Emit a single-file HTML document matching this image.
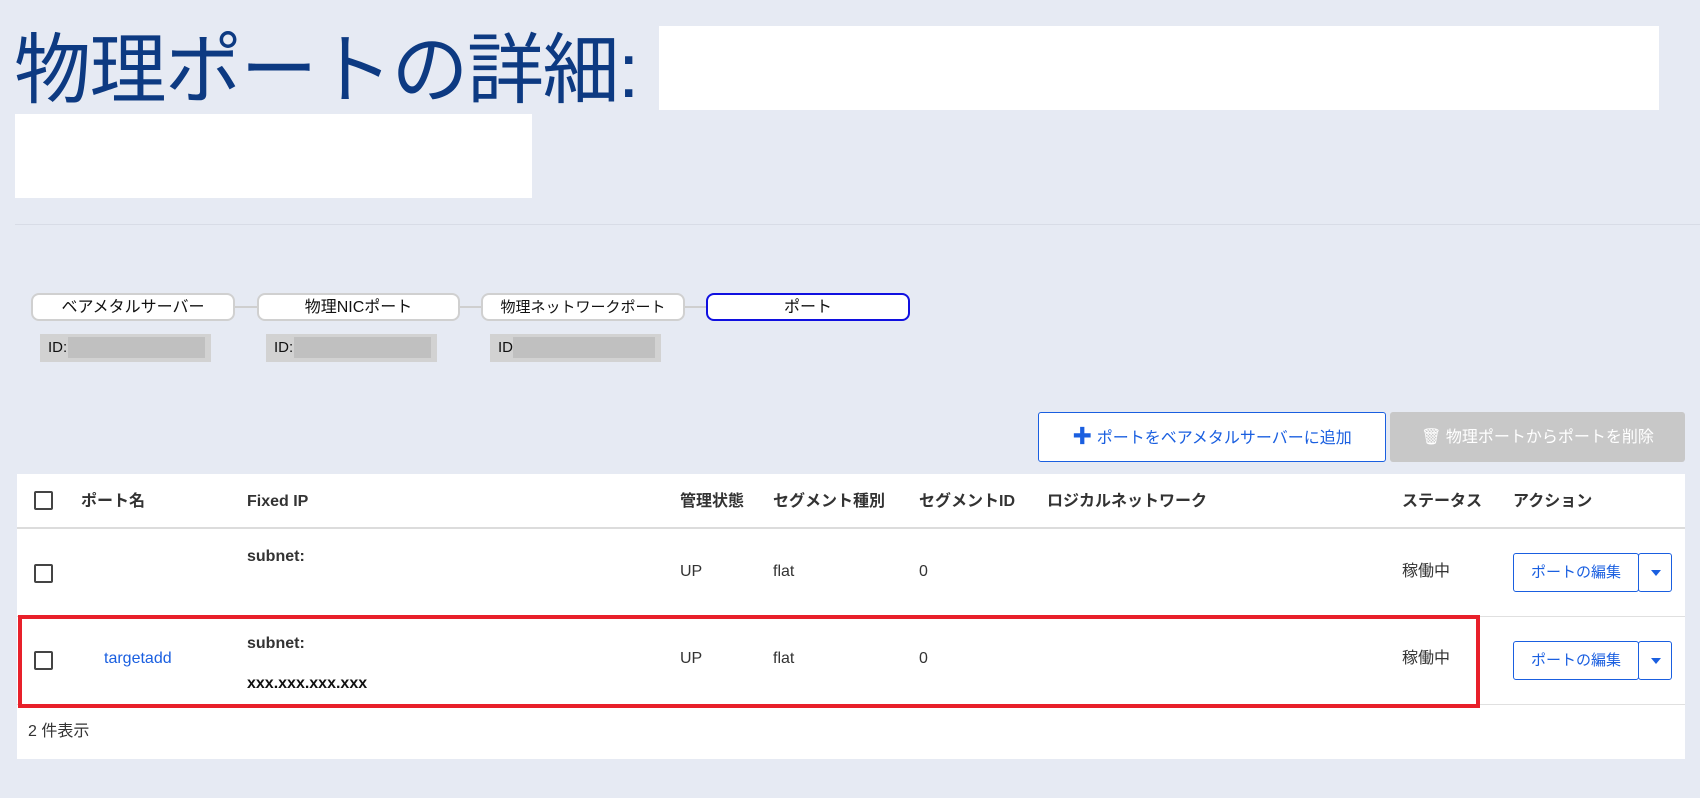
<!DOCTYPE html>
<html><head><meta charset="utf-8"><style>
*{box-sizing:border-box;margin:0;padding:0}
body{width:1700px;height:798px;background:#e6eaf3;font-family:"Liberation Sans","Noto Sans CJK JP",sans-serif;position:relative;overflow:hidden;color:#333}
.a{position:absolute}
.title{left:14px;top:26px;font-size:77px;color:#0d3a82;line-height:90px;white-space:nowrap;letter-spacing:-1.5px}
.wb{background:#fff}
.pill{height:28px;top:293px;background:#fff;border:2px solid #d0d0d0;border-radius:8px;text-align:center;font-size:16px;line-height:25px;color:#111}
.conn{top:306px;height:2px;background:#cfcfcf}
.idb{top:334px;height:28px;background:#d2d2d2;font-size:15px;line-height:28px;padding-left:8px;color:#111}
.idb i{position:absolute;top:3px;bottom:4px;right:6px;background:#c0c0c0}
.btn{font-size:16px;line-height:48px;text-align:center;border-radius:3px}
.tbl{left:17px;top:474px;width:1668px;height:285px;background:#fff}
.th{top:492px;font-size:16px;line-height:20px;font-weight:bold;color:#333}
.cb{width:19px;height:19px;border:2px solid #444;border-radius:2px;background:#fff}
.td{font-size:16px;line-height:20px;color:#333}
.eb{width:126px;height:39px;border:1px solid #1a5fe0;border-radius:3px;color:#1a5fe0;font-size:15px;line-height:37px;text-align:center;background:#fff}
.dd{width:34px;height:39px;border:1px solid #1a5fe0;border-radius:3px;background:#fff}
.dd:after{content:"";position:absolute;left:12px;top:16px;border-left:5px solid transparent;border-right:5px solid transparent;border-top:6px solid #1a5fe0}
</style></head><body>
<div class="a title">物理ポートの詳細:</div>
<div class="a wb" style="left:659px;top:26px;width:1000px;height:84px"></div>
<div class="a wb" style="left:15px;top:114px;width:517px;height:84px"></div>
<div class="a" style="left:15px;top:224px;width:1685px;height:1px;background:#d8dce6"></div>

<div class="a conn" style="left:235px;width:22px"></div>
<div class="a conn" style="left:460px;width:22px"></div>
<div class="a conn" style="left:685px;width:22px"></div>
<div class="a pill" style="left:31px;width:204px">ベアメタルサーバー</div>
<div class="a pill" style="left:257px;width:203px">物理NICポート</div>
<div class="a pill" style="left:481px;width:204px;font-size:15px">物理ネットワークポート</div>
<div class="a pill" style="left:706px;width:204px;border-color:#1010e0">ポート</div>
<div class="a idb" style="left:40px;width:171px">ID:<i style="left:28px"></i></div>
<div class="a idb" style="left:266px;width:171px">ID:<i style="left:28px"></i></div>
<div class="a idb" style="left:490px;width:171px">ID<i style="left:23px"></i></div>

<div class="a btn" style="left:1038px;top:412px;width:348px;height:50px;background:#fff;border:1px solid #1a5fe0;color:#1a5fe0"><b style="font-size:20px">✚</b> ポートをベアメタルサーバーに追加</div>
<div class="a btn" style="left:1390px;top:412px;width:295px;height:50px;background:#c8c8c8;color:#fff;line-height:52px">🗑 物理ポートからポートを削除</div>

<div class="a tbl"></div>
<div class="a" style="left:17px;top:527px;width:1668px;height:2px;background:#dcdcdc"></div>
<div class="a" style="left:17px;top:616px;width:1668px;height:1px;background:#e0e0e0"></div>
<div class="a" style="left:17px;top:704px;width:1668px;height:1px;background:#e0e0e0"></div>

<div class="a cb" style="left:34px;top:491px"></div>
<div class="a th" style="left:81px">ポート名</div>
<div class="a th" style="left:247px">Fixed IP</div>
<div class="a th" style="left:680px">管理状態</div>
<div class="a th" style="left:773px">セグメント種別</div>
<div class="a th" style="left:919px">セグメントID</div>
<div class="a th" style="left:1047px">ロジカルネットワーク</div>
<div class="a th" style="left:1402px">ステータス</div>
<div class="a th" style="left:1513px">アクション</div>

<div class="a cb" style="left:34px;top:564px"></div>
<div class="a td" style="left:247px;top:547px;font-weight:bold">subnet:</div>
<div class="a td" style="left:680px;top:562px">UP</div>
<div class="a td" style="left:773px;top:562px">flat</div>
<div class="a td" style="left:919px;top:562px">0</div>
<div class="a td" style="left:1402px;top:562px">稼働中</div>
<div class="a eb" style="left:1513px;top:553px">ポートの編集</div>
<div class="a dd" style="left:1638px;top:553px"></div>

<div class="a cb" style="left:34px;top:651px"></div>
<div class="a td" style="left:104px;top:649px;color:#1a5fe0">targetadd</div>
<div class="a td" style="left:247px;top:634px;font-weight:bold">subnet:</div>
<div class="a td" style="left:247px;top:674px;font-weight:bold;color:#111">xxx.xxx.xxx.xxx</div>
<div class="a td" style="left:680px;top:649px">UP</div>
<div class="a td" style="left:773px;top:649px">flat</div>
<div class="a td" style="left:919px;top:649px">0</div>
<div class="a td" style="left:1402px;top:649px">稼働中</div>
<div class="a eb" style="left:1513px;top:641px">ポートの編集</div>
<div class="a dd" style="left:1638px;top:641px"></div>

<div class="a" style="left:18px;top:615px;width:1462px;height:93px;border:4px solid #e8202a"></div>
<div class="a td" style="left:28px;top:722px">2 件表示</div>
</body></html>
